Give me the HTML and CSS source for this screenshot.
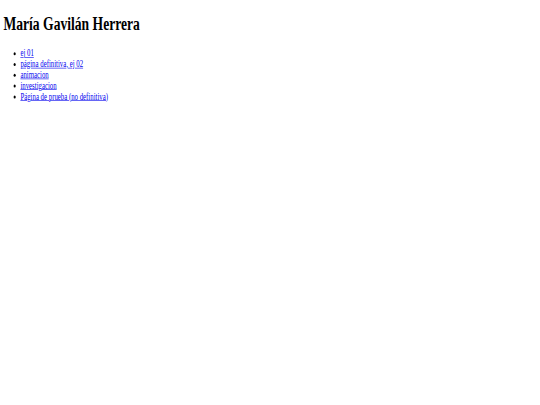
FILE: index.html
```html
<!DOCTYPE html>
<html lang="es">
<head>
<meta charset="utf-8">
<title>María Gavilán Herrera</title>
<link rel="stylesheet" href="styles.css">
</head>
<body>
<div class="frame">
  <div class="page">
    <h1 class="title">María Gavilán Herrera</h1>
    <ul class="links">
      <li><a href="#">ej 01</a></li>
      <li><a href="#">página definitiva, ej 02</a></li>
      <li><a href="#">animacion</a></li>
      <li><a href="#">investigacion</a></li>
      <li><a href="#">Página de prueba (no definitiva)</a></li>
    </ul>
  </div>
</div>
</body>
</html>
```
FILE: styles.css
```css
html, body {
  margin: 0;
  padding: 0;
  background: #ffffff;
  overflow: hidden;
}
.frame {
  width: 540px;
  height: 405px;
  overflow: hidden;
}
.page {
  width: 1270px;
  height: 675px;
  box-sizing: border-box;
  padding: 8px;
  font-family: "Liberation Serif", "Times New Roman", serif;
  font-size: 16px;
  color: #000;
  transform: scale(0.425, 0.6);
  transform-origin: 0 0;
  display: flow-root;
}
.title {
  font-size: 32px;
  font-weight: bold;
  margin: 13.44px 0 21.44px;
}
.links {
  margin: 16px 0;
  padding-left: 40px;
}
.links a {
  color: #0000ee;
}
```
